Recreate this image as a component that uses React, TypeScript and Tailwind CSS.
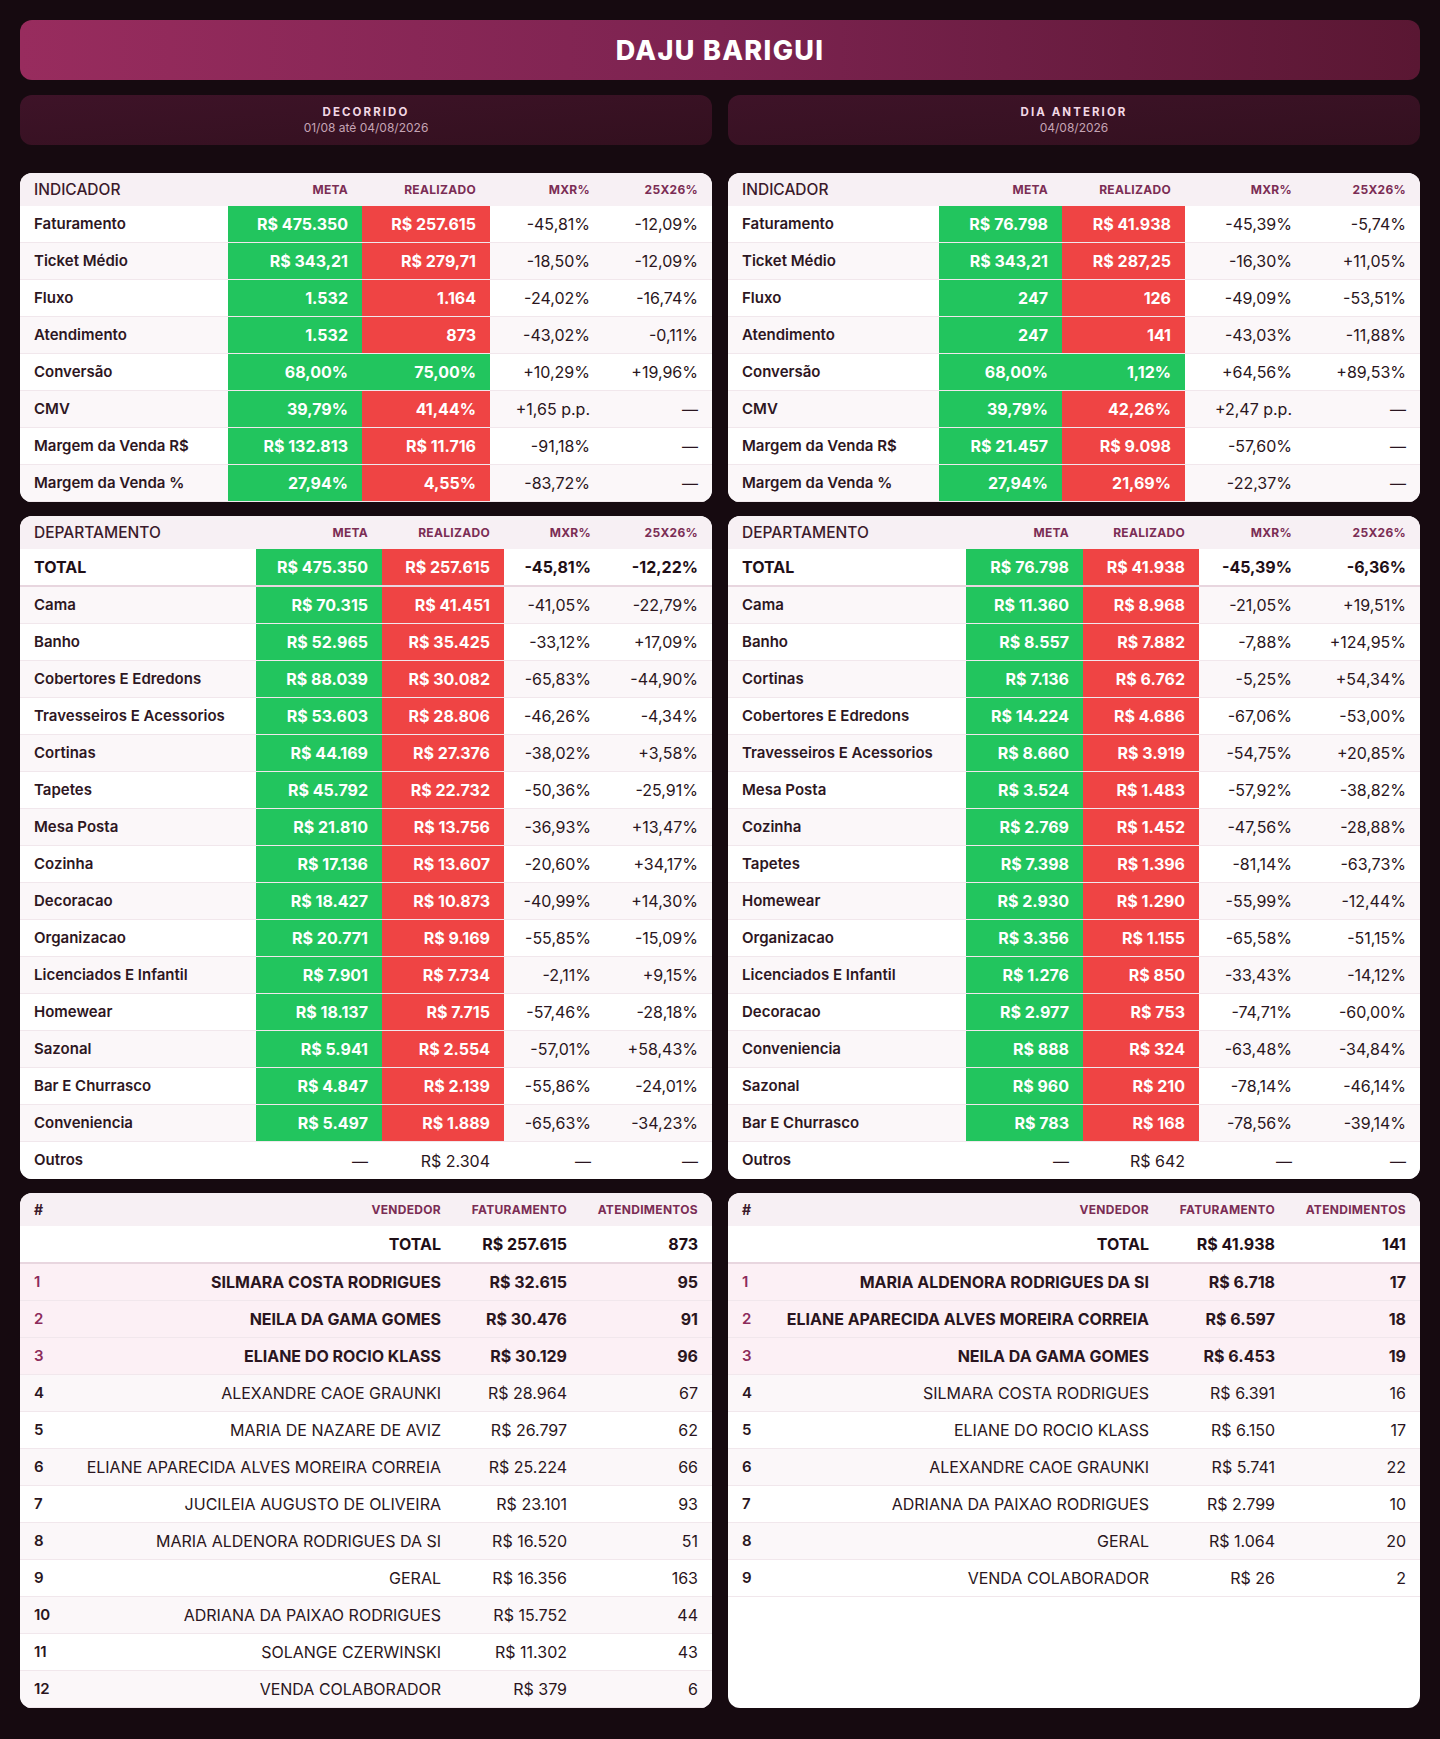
import React from "react";

type Tone = "g" | "r" | "n";

interface KpiRow {
  label: string;
  meta: string;
  real: string;
  realTone: Tone;
  mxr: string;
  yoy: string;
}

const kpiLeft: KpiRow[] = [
  { label: "Faturamento", meta: "R$ 475.350", real: "R$ 257.615", realTone: "r", mxr: "-45,81%", yoy: "-12,09%" },
  { label: "Ticket Médio", meta: "R$ 343,21", real: "R$ 279,71", realTone: "r", mxr: "-18,50%", yoy: "-12,09%" },
  { label: "Fluxo", meta: "1.532", real: "1.164", realTone: "r", mxr: "-24,02%", yoy: "-16,74%" },
  { label: "Atendimento", meta: "1.532", real: "873", realTone: "r", mxr: "-43,02%", yoy: "-0,11%" },
  { label: "Conversão", meta: "68,00%", real: "75,00%", realTone: "g", mxr: "+10,29%", yoy: "+19,96%" },
  { label: "CMV", meta: "39,79%", real: "41,44%", realTone: "r", mxr: "+1,65 p.p.", yoy: "—" },
  { label: "Margem da Venda R$", meta: "R$ 132.813", real: "R$ 11.716", realTone: "r", mxr: "-91,18%", yoy: "—" },
  { label: "Margem da Venda %", meta: "27,94%", real: "4,55%", realTone: "r", mxr: "-83,72%", yoy: "—" },
];

const kpiRight: KpiRow[] = [
  { label: "Faturamento", meta: "R$ 76.798", real: "R$ 41.938", realTone: "r", mxr: "-45,39%", yoy: "-5,74%" },
  { label: "Ticket Médio", meta: "R$ 343,21", real: "R$ 287,25", realTone: "r", mxr: "-16,30%", yoy: "+11,05%" },
  { label: "Fluxo", meta: "247", real: "126", realTone: "r", mxr: "-49,09%", yoy: "-53,51%" },
  { label: "Atendimento", meta: "247", real: "141", realTone: "r", mxr: "-43,03%", yoy: "-11,88%" },
  { label: "Conversão", meta: "68,00%", real: "1,12%", realTone: "g", mxr: "+64,56%", yoy: "+89,53%" },
  { label: "CMV", meta: "39,79%", real: "42,26%", realTone: "r", mxr: "+2,47 p.p.", yoy: "—" },
  { label: "Margem da Venda R$", meta: "R$ 21.457", real: "R$ 9.098", realTone: "r", mxr: "-57,60%", yoy: "—" },
  { label: "Margem da Venda %", meta: "27,94%", real: "21,69%", realTone: "r", mxr: "-22,37%", yoy: "—" },
];

// [label, meta, realizado, mxr, 25x26]
const deptLeft: string[][] = [
  ["Cama", "R$ 70.315", "R$ 41.451", "-41,05%", "-22,79%"],
  ["Banho", "R$ 52.965", "R$ 35.425", "-33,12%", "+17,09%"],
  ["Cobertores E Edredons", "R$ 88.039", "R$ 30.082", "-65,83%", "-44,90%"],
  ["Travesseiros E Acessorios", "R$ 53.603", "R$ 28.806", "-46,26%", "-4,34%"],
  ["Cortinas", "R$ 44.169", "R$ 27.376", "-38,02%", "+3,58%"],
  ["Tapetes", "R$ 45.792", "R$ 22.732", "-50,36%", "-25,91%"],
  ["Mesa Posta", "R$ 21.810", "R$ 13.756", "-36,93%", "+13,47%"],
  ["Cozinha", "R$ 17.136", "R$ 13.607", "-20,60%", "+34,17%"],
  ["Decoracao", "R$ 18.427", "R$ 10.873", "-40,99%", "+14,30%"],
  ["Organizacao", "R$ 20.771", "R$ 9.169", "-55,85%", "-15,09%"],
  ["Licenciados E Infantil", "R$ 7.901", "R$ 7.734", "-2,11%", "+9,15%"],
  ["Homewear", "R$ 18.137", "R$ 7.715", "-57,46%", "-28,18%"],
  ["Sazonal", "R$ 5.941", "R$ 2.554", "-57,01%", "+58,43%"],
  ["Bar E Churrasco", "R$ 4.847", "R$ 2.139", "-55,86%", "-24,01%"],
  ["Conveniencia", "R$ 5.497", "R$ 1.889", "-65,63%", "-34,23%"],
];

const deptRight: string[][] = [
  ["Cama", "R$ 11.360", "R$ 8.968", "-21,05%", "+19,51%"],
  ["Banho", "R$ 8.557", "R$ 7.882", "-7,88%", "+124,95%"],
  ["Cortinas", "R$ 7.136", "R$ 6.762", "-5,25%", "+54,34%"],
  ["Cobertores E Edredons", "R$ 14.224", "R$ 4.686", "-67,06%", "-53,00%"],
  ["Travesseiros E Acessorios", "R$ 8.660", "R$ 3.919", "-54,75%", "+20,85%"],
  ["Mesa Posta", "R$ 3.524", "R$ 1.483", "-57,92%", "-38,82%"],
  ["Cozinha", "R$ 2.769", "R$ 1.452", "-47,56%", "-28,88%"],
  ["Tapetes", "R$ 7.398", "R$ 1.396", "-81,14%", "-63,73%"],
  ["Homewear", "R$ 2.930", "R$ 1.290", "-55,99%", "-12,44%"],
  ["Organizacao", "R$ 3.356", "R$ 1.155", "-65,58%", "-51,15%"],
  ["Licenciados E Infantil", "R$ 1.276", "R$ 850", "-33,43%", "-14,12%"],
  ["Decoracao", "R$ 2.977", "R$ 753", "-74,71%", "-60,00%"],
  ["Conveniencia", "R$ 888", "R$ 324", "-63,48%", "-34,84%"],
  ["Sazonal", "R$ 960", "R$ 210", "-78,14%", "-46,14%"],
  ["Bar E Churrasco", "R$ 783", "R$ 168", "-78,56%", "-39,14%"],
];

const sellersLeft: string[][] = [
  ["SILMARA COSTA RODRIGUES", "R$ 32.615", "95"],
  ["NEILA DA GAMA GOMES", "R$ 30.476", "91"],
  ["ELIANE DO ROCIO KLASS", "R$ 30.129", "96"],
  ["ALEXANDRE CAOE GRAUNKI", "R$ 28.964", "67"],
  ["MARIA DE NAZARE DE AVIZ", "R$ 26.797", "62"],
  ["ELIANE APARECIDA ALVES MOREIRA CORREIA", "R$ 25.224", "66"],
  ["JUCILEIA AUGUSTO DE OLIVEIRA", "R$ 23.101", "93"],
  ["MARIA ALDENORA RODRIGUES DA SI", "R$ 16.520", "51"],
  ["GERAL", "R$ 16.356", "163"],
  ["ADRIANA DA PAIXAO RODRIGUES", "R$ 15.752", "44"],
  ["SOLANGE CZERWINSKI", "R$ 11.302", "43"],
  ["VENDA COLABORADOR", "R$ 379", "6"],
];

const sellersRight: string[][] = [
  ["MARIA ALDENORA RODRIGUES DA SI", "R$ 6.718", "17"],
  ["ELIANE APARECIDA ALVES MOREIRA CORREIA", "R$ 6.597", "18"],
  ["NEILA DA GAMA GOMES", "R$ 6.453", "19"],
  ["SILMARA COSTA RODRIGUES", "R$ 6.391", "16"],
  ["ELIANE DO ROCIO KLASS", "R$ 6.150", "17"],
  ["ALEXANDRE CAOE GRAUNKI", "R$ 5.741", "22"],
  ["ADRIANA DA PAIXAO RODRIGUES", "R$ 2.799", "10"],
  ["GERAL", "R$ 1.064", "20"],
  ["VENDA COLABORADOR", "R$ 26", "2"],
];

const th = "flex items-center justify-end px-3.5 text-[12px] font-bold tracking-wide text-[#7b2d54]";
const cell = "flex items-center justify-end px-3.5 text-[16px]";
const labelCls = "flex items-center px-3.5 text-[15px] font-semibold text-[#2d1622]";
const rowBase = "grid h-[37px] border-b border-[#f1e7ec] text-[#2a1520]";

function toneCls(t: Tone) {
  if (t === "g") return "bg-[#22c55e] text-white font-bold";
  if (t === "r") return "bg-[#ef4444] text-white font-bold";
  return "";
}

function HeaderRow({ cols, first }: { cols: string; first: string }) {
  return (
    <div className={`grid h-[33px] bg-[#f7f0f4] ${cols}`}>
      <div className="flex items-center px-3.5 text-[15.5px] font-medium text-[#3b1a2b]">{first}</div>
      <div className={th}>META</div>
      <div className={th}>REALIZADO</div>
      <div className={th}>MXR%</div>
      <div className={th}>25X26%</div>
    </div>
  );
}

function KpiCard({ rows, cols }: { rows: KpiRow[]; cols: string }) {
  return (
    <div className="overflow-hidden rounded-xl bg-white">
      <HeaderRow cols={cols} first="INDICADOR" />
      {rows.map((r, i) => (
        <div key={r.label} className={`${rowBase} ${cols} ${i % 2 === 1 ? "bg-[#fbf7f9]" : "bg-white"}`}>
          <div className={labelCls}>{r.label}</div>
          <div className={`${cell} ${toneCls("g")}`}>{r.meta}</div>
          <div className={`${cell} ${toneCls(r.realTone)}`}>{r.real}</div>
          <div className={cell}>{r.mxr}</div>
          <div className={cell}>{r.yoy}</div>
        </div>
      ))}
    </div>
  );
}

function DeptCard({ total, rows, outros, cols }: { total: string[]; rows: string[][]; outros: string; cols: string }) {
  return (
    <div className="overflow-hidden rounded-xl bg-white">
      <HeaderRow cols={cols} first="DEPARTAMENTO" />
      <div className={`grid h-[38px] border-b-2 border-[#e8d6df] bg-white text-[#1f0f17] ${cols}`}>
        <div className="flex items-center px-3.5 text-[16px] font-bold">TOTAL</div>
        <div className={`${cell} ${toneCls("g")}`}>{total[0]}</div>
        <div className={`${cell} ${toneCls("r")}`}>{total[1]}</div>
        <div className={`${cell} font-bold`}>{total[2]}</div>
        <div className={`${cell} font-bold`}>{total[3]}</div>
      </div>
      {rows.map((r, i) => (
        <div key={r[0]} className={`${rowBase} ${cols} ${i % 2 === 0 ? "bg-[#fbf7f9]" : "bg-white"}`}>
          <div className={labelCls}>{r[0]}</div>
          <div className={`${cell} ${toneCls("g")}`}>{r[1]}</div>
          <div className={`${cell} ${toneCls("r")}`}>{r[2]}</div>
          <div className={cell}>{r[3]}</div>
          <div className={cell}>{r[4]}</div>
        </div>
      ))}
      <div className={`${rowBase} ${cols} border-b-0 bg-white`}>
        <div className={labelCls}>Outros</div>
        <div className={cell}>—</div>
        <div className={cell}>{outros}</div>
        <div className={cell}>—</div>
        <div className={cell}>—</div>
      </div>
    </div>
  );
}

function SellerCard({ total, rows }: { total: string[]; rows: string[][] }) {
  const cols = "grid-cols-[48px_minmax(0,1fr)_126px_131px]";
  return (
    <div className="overflow-hidden rounded-xl bg-white">
      <div className={`grid h-[33px] bg-[#f7f0f4] ${cols}`}>
        <div className="flex items-center px-3.5 text-[14px] font-bold text-[#3b1a2b]">#</div>
        <div className={th}>VENDEDOR</div>
        <div className={th}>FATURAMENTO</div>
        <div className={th}>ATENDIMENTOS</div>
      </div>
      <div className={`grid h-[38px] border-b-2 border-[#e8d6df] bg-white font-bold text-[#1f0f17] ${cols}`}>
        <div />
        <div className={cell}>TOTAL</div>
        <div className={cell}>{total[0]}</div>
        <div className={cell}>{total[1]}</div>
      </div>
      {rows.map((r, i) => {
        const top = i < 3;
        const bg = top ? "bg-[#fcf0f5]" : i % 2 === 1 ? "bg-[#fbf7f9]" : "bg-white";
        return (
          <div key={r[0] + i} className={`${rowBase} ${cols} ${bg} ${top ? "font-bold text-[#1f0f17]" : ""}`}>
            <div className={`flex items-center px-3.5 text-[15px] font-semibold ${top ? "text-[#8c2b5b]" : "text-[#2a1520]"}`}>{i + 1}</div>
            <div className={`${cell} whitespace-nowrap`}>{r[0]}</div>
            <div className={cell}>{r[1]}</div>
            <div className={cell}>{r[2]}</div>
          </div>
        );
      })}
    </div>
  );
}

function PeriodCard({ title, sub }: { title: string; sub: string }) {
  return (
    <div className="flex h-[50px] flex-col items-center justify-center rounded-xl bg-linear-to-br from-[#3e1328] to-[#33101f]">
      <div className="text-[11.5px] font-bold leading-4 tracking-[0.18em] text-[#f2d8e4]">{title}</div>
      <div className="text-[12px] leading-4 text-[#c5a4b5]">{sub}</div>
    </div>
  );
}

export default function App() {
  return (
    <div className="min-h-screen bg-[#160a10] px-5 pt-5 pb-[33px] font-['Inter',sans-serif]">
      <div className="flex h-[60px] items-center justify-center rounded-xl bg-linear-to-r from-[#982c5e] via-[#7c2350] to-[#5a1733] pt-0.5">
        <h1 className="text-[27px] font-extrabold tracking-wider text-white">DAJU BARIGUI</h1>
      </div>

      <div className="mt-[15px] grid grid-cols-2 gap-4">
        <PeriodCard title="DECORRIDO" sub="01/08 até 04/08/2026" />
        <PeriodCard title="DIA ANTERIOR" sub="04/08/2026" />
      </div>

      <div className="mt-[28px] grid grid-cols-2 gap-x-4 gap-y-[14px]">
        <KpiCard rows={kpiLeft} cols="grid-cols-[208px_134px_128px_114px_1fr]" />
        <KpiCard rows={kpiRight} cols="grid-cols-[211px_123px_123px_121px_1fr]" />

        <DeptCard
          total={["R$ 475.350", "R$ 257.615", "-45,81%", "-12,22%"]}
          rows={deptLeft}
          outros="R$ 2.304"
          cols="grid-cols-[236px_126px_122px_101px_1fr]"
        />
        <DeptCard
          total={["R$ 76.798", "R$ 41.938", "-45,39%", "-6,36%"]}
          rows={deptRight}
          outros="R$ 642"
          cols="grid-cols-[238px_117px_116px_107px_1fr]"
        />

        <SellerCard total={["R$ 257.615", "873"]} rows={sellersLeft} />
        <SellerCard total={["R$ 41.938", "141"]} rows={sellersRight} />
      </div>
    </div>
  );
}
